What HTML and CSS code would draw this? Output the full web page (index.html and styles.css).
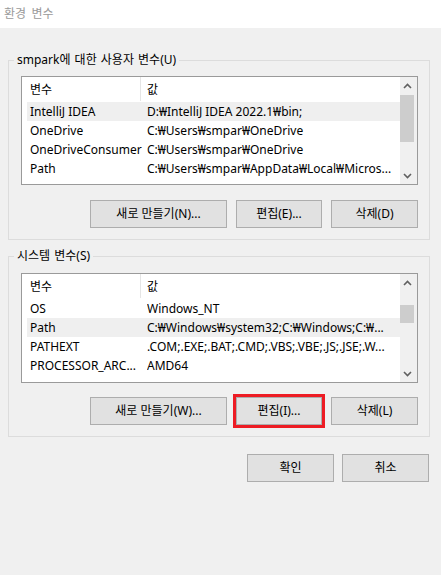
FILE: index.html
```html
<!DOCTYPE html>
<html lang="ko">
<head>
<meta charset="utf-8">
<title>환경 변수</title>
<link rel="stylesheet" href="styles.css">
</head>
<body>
<div class="titlebar">환경 변수</div>
<div class="dialog">
  <fieldset class="group group-user">
    <legend class="group-title">smpark에 대한 사용자 변수(U)</legend>
    <div class="listbox">
      <div class="list-main">
        <div class="list-header">
          <div class="head-name">변수</div>
          <div class="head-value">값</div>
        </div>
        <div class="row row-selected"><div class="cell-name">IntelliJ IDEA</div><div class="cell-value">D:₩IntelliJ IDEA 2022.1₩bin;</div></div>
        <div class="row"><div class="cell-name">OneDrive</div><div class="cell-value">C:₩Users₩smpar₩OneDrive</div></div>
        <div class="row"><div class="cell-name">OneDriveConsumer</div><div class="cell-value">C:₩Users₩smpar₩OneDrive</div></div>
        <div class="row"><div class="cell-name">Path</div><div class="cell-value">C:₩Users₩smpar₩AppData₩Local₩Micros...</div></div>
        <div class="row"><div class="cell-name"></div><div class="cell-value"></div></div>
      </div>
      <div class="scrollbar">
        <div class="arrow"><svg width="9" height="6" viewBox="0 0 9 6"><polyline points="1,5 4.5,1.5 8,5" fill="none" stroke="#606060" stroke-width="1.6"/></svg></div>
        <div class="track"><div class="thumb" style="margin-top:1px;height:47px"></div></div>
        <div class="arrow"><svg width="9" height="6" viewBox="0 0 9 6"><polyline points="1,1 4.5,4.5 8,1" fill="none" stroke="#606060" stroke-width="1.6"/></svg></div>
      </div>
    </div>
    <div class="btn-row">
      <button class="btn btn-wide">새로 만들기(N)...</button>
      <button class="btn btn-mid">편집(E)...</button>
      <button class="btn">삭제(D)</button>
    </div>
  </fieldset>

  <fieldset class="group group-system">
    <legend class="group-title">시스템 변수(S)</legend>
    <div class="listbox">
      <div class="list-main">
        <div class="list-header">
          <div class="head-name">변수</div>
          <div class="head-value">값</div>
        </div>
        <div class="row"><div class="cell-name">OS</div><div class="cell-value">Windows_NT</div></div>
        <div class="row row-selected"><div class="cell-name">Path</div><div class="cell-value">C:₩Windows₩system32;C:₩Windows;C:₩...</div></div>
        <div class="row"><div class="cell-name">PATHEXT</div><div class="cell-value">.COM;.EXE;.BAT;.CMD;.VBS;.VBE;.JS;.JSE;.W...</div></div>
        <div class="row"><div class="cell-name">PROCESSOR_ARC...</div><div class="cell-value">AMD64</div></div>
        <div class="row"><div class="cell-name"></div><div class="cell-value"></div></div>
      </div>
      <div class="scrollbar">
        <div class="arrow"><svg width="9" height="6" viewBox="0 0 9 6"><polyline points="1,5 4.5,1.5 8,5" fill="none" stroke="#606060" stroke-width="1.6"/></svg></div>
        <div class="track"><div class="thumb" style="margin-top:14px;height:18px"></div></div>
        <div class="arrow"><svg width="9" height="6" viewBox="0 0 9 6"><polyline points="1,1 4.5,4.5 8,1" fill="none" stroke="#606060" stroke-width="1.6"/></svg></div>
      </div>
    </div>
    <div class="btn-row">
      <button class="btn btn-wide">새로 만들기(W)...</button>
      <button class="btn btn-mid btn-highlight">편집(I)...</button>
      <button class="btn">삭제(L)</button>
    </div>
  </fieldset>

  <div class="footer">
    <button class="btn">확인</button>
    <button class="btn">취소</button>
  </div>
</div>
</body>
</html>
```

FILE: styles.css
```css
* { box-sizing: border-box; }

html, body {
  margin: 0;
  padding: 0;
}

body {
  width: 441px;
  height: 575px;
  background: #f0f0f0;
  font-family: "Noto Sans", "Noto Sans CJK KR", sans-serif;
  font-size: 12px;
  color: #000;
  overflow: hidden;
}

.titlebar {
  height: 28px;
  background: #ffffff;
  color: #9a9a9a;
  padding-left: 4px;
  line-height: 26px;
  font-family: "Noto Sans CJK KR", sans-serif;
  font-size: 12px;
  word-spacing: 2px;
}

.dialog {
  display: flex;
  flex-direction: column;
}

.group {
  margin: 0 0 0 8px;
  width: 422px;
  border: 1px solid #dcdcdc;
  padding: 8px 11px 11px 12px;
  min-inline-size: 0;
}

.group-user { margin-top: 24px; }
.group-system { margin-top: 8px; padding-top: 9px; }

.group-title {
  padding: 0 3px;
  margin-left: -7px;
  line-height: 16px;
  height: 16px;
  font-family: "Noto Sans", "Noto Sans CJK KR", sans-serif;
  font-size: 12px;
  word-spacing: 1px;
  color: #000;
}

.listbox {
  display: flex;
  width: 397px;
  height: 109px;
  border: 1px solid #9a9a9a;
  background: #fff;
}

.group-system .listbox { height: 110px; }

.list-main {
  flex: 1;
  min-width: 0;
  overflow: hidden;
}

.list-header {
  display: flex;
  height: 25px;
  line-height: 24px;
  font-family: "Noto Sans CJK KR", sans-serif;
}

.head-name {
  width: 119px;
  padding-left: 8px;
  border-right: 1px solid #e5e5e5;
  height: 24px;
}

.head-value {
  padding-left: 6px;
}

.row {
  display: flex;
  height: 19px;
  line-height: 19px;
  margin-left: 5px;
  white-space: nowrap;
}

.row-selected { background: #efefef; }

.cell-name {
  width: 120px;
  flex: none;
  padding-left: 3px;
  overflow: hidden;
}

.cell-value {
  flex: 1;
  min-width: 0;
  overflow: hidden;
}

.scrollbar {
  width: 17px;
  flex: none;
  background: #f0f0f0;
  display: flex;
  flex-direction: column;
}

.arrow {
  height: 17px;
  flex: none;
  display: flex;
  align-items: center;
  justify-content: center;
  padding-right: 2px;
}

.track {
  flex: 1;
}

.thumb {
  width: 14px;
  background: #cdcdcd;
}

.btn-row {
  display: flex;
  justify-content: flex-end;
  gap: 9px;
  margin-top: 15px;
}

.group-system .btn-row { margin-top: 14px; }

.btn {
  width: 87px;
  height: 28px;
  margin: 0;
  padding: 0;
  border: 1px solid #adadad;
  background: #e1e1e1;
  color: #000;
  font-family: "Noto Sans", "Noto Sans CJK KR", sans-serif;
  font-size: 12px;
  line-height: 26px;
}

.btn-wide { width: 137px; }
.btn-mid { width: 86px; }

.btn-highlight {
  outline: 3px solid #ed1c24;
}

.footer {
  display: flex;
  justify-content: flex-end;
  gap: 8px;
  margin-top: 17px;
  padding-right: 12px;
}
```
